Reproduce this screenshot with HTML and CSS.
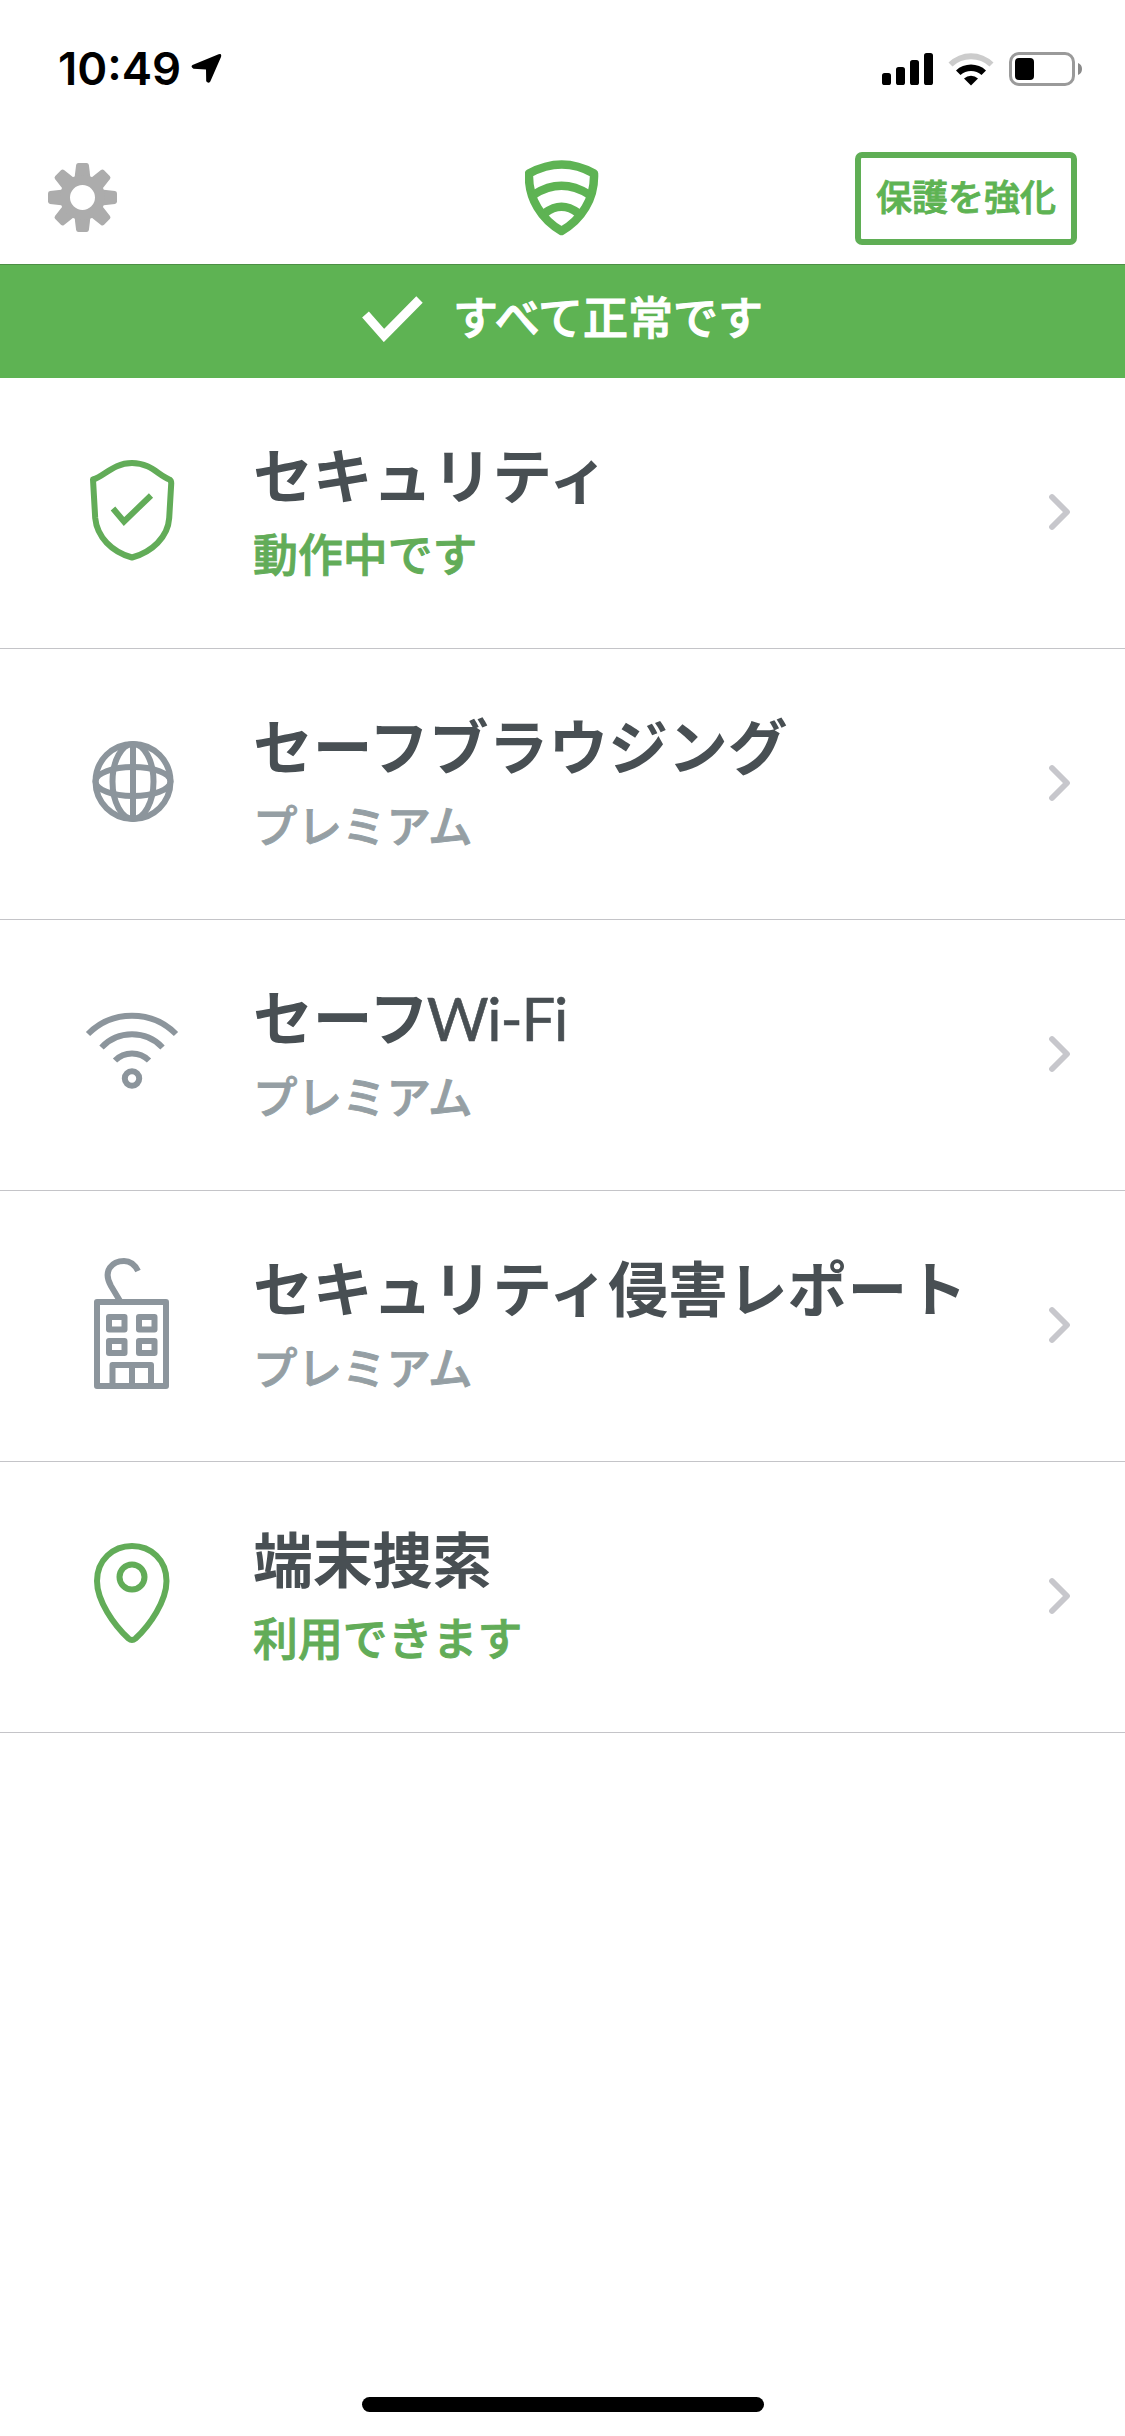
FILE: index.html
```html
<!DOCTYPE html>
<html lang="ja">
<head>
<meta charset="utf-8">
<title>すべて正常です</title>
<link rel="stylesheet" href="styles.css">
</head>
<body>
<div class="screen">
  <div class="status">
    <div class="status-left">
      <span class="time">10:49</span>
      <svg class="location" width="32" height="32" viewBox="0 0 32 32"><path d="M1.500 12 27.600 1.300Q31 .2 30 4L19.300 28.500Q17.300 31 15.200 28.200L15 16.400 2.500 15.700Q-.8 14 1.500 12Z"/></svg>
    </div>
    <div class="status-right">
      <svg width="52" height="32" viewBox="0 0 52 32"><rect y="20" width="9" height="12" rx="2.600"/><rect x="14" y="14" width="9" height="18" rx="2.600"/><rect x="28" y="7" width="9" height="25" rx="2.600"/><rect x="42" width="9" height="32" rx="2.600"/></svg>
      <svg class="wifi-status" width="46" height="34" viewBox="0 0 46 34"><path d="M.5 10.500A32 32 0 0 1 45.500 10.500L41.500 14.500A27 27 0 0 0 4.500 14.500Z" fill="#ccc"/><path d="M8 18.500A22 22 0 0 1 38 18.500L33.500 23A15.500 15.500 0 0 0 12.500 23Z"/><path d="M16 26.500A10.500 10.500 0 0 1 30 26.500L23 33.500Z"/></svg>
      <svg class="battery" width="74" height="34" viewBox="0 0 74 34"><rect x="1.500" y="1.500" width="63" height="31" rx="8.500" fill="none" stroke="#9a9a9a" stroke-width="3"/><rect x="6" y="6" width="19" height="22" rx="4"/><path d="M69 11Q73 12.500 73 17T69 23Z" fill="#8a8a8a"/></svg>
    </div>
  </div>

  <header class="nav">
    <svg class="gear" width="69" height="69" viewBox="-34.500 -34.500 69 69">
      <defs><path id="tooth" d="M-8-19-6.400-32.500Q-6-34.500-4-34.500H4Q6-34.500 6.400-32.500L8-19Z"/></defs>
      <g fill="#acacac"><use href="#tooth"/><use href="#tooth" transform="rotate(45)"/><use href="#tooth" transform="rotate(90)"/><use href="#tooth" transform="rotate(135)"/><use href="#tooth" transform="rotate(180)"/><use href="#tooth" transform="rotate(225)"/><use href="#tooth" transform="rotate(270)"/><use href="#tooth" transform="rotate(315)"/></g>
      <circle r="17.500" fill="none" stroke="#acacac" stroke-width="10"/>
    </svg>
    <svg class="logo" width="74" height="76" viewBox="0 0 74 76" fill="none" stroke="#5eb353" stroke-width="8.500">
      <path d="M4 13.500Q37-4.500 69 13.500C70 39 56 60 36.500 71 17 60 3 39 4 13.500Z" stroke-linejoin="round"/>
      <path d="M9 34.500Q36.500 17 64 34.500M20 53Q36.500 40.500 53 53"/>
    </svg>
    <button class="upgrade">保護を強化</button>
  </header>

  <div class="banner">
    <svg width="61" height="46" viewBox="0 0 61 46"><path d="M3.500 18.500 22 39.500 57.500 3.500" fill="none" stroke="#fff" stroke-width="9"/></svg>
    <span>すべて正常です</span>
  </div>

  <ul class="list">
    <li class="row on">
      <svg class="icon" viewBox="0 0 100 140"><path d="M11 36.500C23 33 31 20 50 20S77 33 87.500 36.500Q89.500 38 89.200 41L87.200 75C86 94 70 109 50 114.500 30 109 15 94 13.200 75L11 36.500Z" stroke-linejoin="round"/><path d="M31 65.500 42 78.500 69 52.500"/></svg>
      <div class="copy"><h2>セキュリティ</h2><p>動作中です</p></div>
      <svg class="chevron" viewBox="0 0 24 40"><path d="M5 4 20 19 5 34"/></svg>
    </li>
    <li class="row">
      <svg class="icon" viewBox="0 0 100 140"><circle cx="51" cy="67.500" r="37.500"/><path d="M51 30V105"/><ellipse cx="51" cy="67.500" rx="20.500" ry="37.500"/><ellipse cx="51" cy="67.500" rx="37.500" ry="14.500"/></svg>
      <div class="copy"><h2>セーフブラウジング</h2><p>プレミアム</p></div>
      <svg class="chevron" viewBox="0 0 24 40"><path d="M5 4 20 19 5 34"/></svg>
    </li>
    <li class="row">
      <svg class="icon" viewBox="0 0 100 140"><path d="M6 49A62 62 0 0 1 94 49M19.500 62.500A42 42 0 0 1 80.500 62.500M33 75.500A24 24 0 0 1 67 75.500"/><circle cx="50" cy="93.500" r="7.200"/></svg>
      <div class="copy"><h2>セーフ<span class="latin">Wi-Fi</span></h2><p>プレミアム</p></div>
      <svg class="chevron" viewBox="0 0 24 40"><path d="M5 4 20 19 5 34"/></svg>
    </li>
    <li class="row">
      <svg class="icon" viewBox="0 0 100 140" stroke-linejoin="round"><path d="M15 46H84V130H15ZM27 61H42.500V73.500H27ZM57 61H72.500V73.500H57ZM27 85H42.500V97H27ZM57 85H72.500V97H57ZM30.500 130V109H69V130M50 109V130M38 45 29 30C20 14 31 5 42 5Q51 5 56 15"/></svg>
      <div class="copy"><h2>セキュリティ侵害レポート</h2><p>プレミアム</p></div>
      <svg class="chevron" viewBox="0 0 24 40"><path d="M5 4 20 19 5 34"/></svg>
    </li>
    <li class="row on">
      <svg class="icon" viewBox="0 0 100 140"><path d="M50 19C31 19 15 33 15 54 15 74 32 98 46.500 111.500Q50 114.500 53.500 111.500C68 98 84.500 74 84.500 54 84.500 33 69 19 50 19Z"/><circle cx="50" cy="50" r="12.500"/></svg>
      <div class="copy"><h2>端末捜索</h2><p>利用できます</p></div>
      <svg class="chevron" viewBox="0 0 24 40"><path d="M5 4 20 19 5 34"/></svg>
    </li>
  </ul>
  <div class="home-indicator"></div>
</div>
</body>
</html>
```
FILE: styles.css
```css
* { box-sizing: border-box; margin: 0; padding: 0; }
body { background: #fff; font-family: "Noto Sans CJK JP", sans-serif; }
svg { display: block; flex: none; }
.screen { width: 1125px; height: 2436px; display: flex; flex-direction: column; overflow: hidden; }
.status { height: 132px; display: flex; justify-content: space-between; padding: 0 42px 0 58px; }
.status-left { display: flex; }
.time { font: 600 45.500px/60px Inter, sans-serif; margin-top: 39px; width: 133px; white-space: nowrap; }
.location { margin-top: 53px; }
.status-right { display: flex; padding-top: 53px; }
.wifi-status { margin: -1px 0 0 14px; }
.battery { margin: -1px 0 0 15px; }
.nav { height: 132px; display: flex; align-items: flex-start; padding: 20px 48px 0; }
.gear { margin-top: 11px; }
.logo { margin: 8px 0 0 408px; }
.upgrade { width: 222px; height: 93px; margin-left: auto; border: 6px solid #5fae55; border-radius: 7px; background: #fff; color: #5eb353; font: 500 36px/52px "Noto Sans CJK JP", sans-serif; -webkit-text-stroke: 0.9px currentColor; padding-bottom: 8px; white-space: nowrap; }
.banner { height: 114px; border-top: 1px solid #4d8f45; background: #5eb353; color: #fff; display: flex; align-items: flex-start; padding: 31px 0 0 362px; }
.banner span { font-size: 45px; line-height: 60px; font-weight: 500; -webkit-text-stroke: 1.1px currentColor; margin: -10px 0 0 30px; }
.list { list-style: none; }
.row { height: 271px; border-bottom: 1px solid #c4c4c8; display: flex; padding: 65px 54px 0 82px; color: #959fa4; }
.icon { width: 100px; height: 140px; fill: none; stroke: #8c959c; stroke-width: 6; }
.on { color: #62ac58; }
.on .icon { stroke: #62ac58; }
.copy { margin: -10px 0 0 71px; flex: 1; white-space: nowrap; }
h2 { font-size: 59.800px; height: 80px; line-height: 80px; font-weight: 700; color: #484f53; }
.latin { font-family: Lato, sans-serif; font-weight: 400; line-height: 1; letter-spacing: -1.200px; margin-left: -2px; -webkit-text-stroke: 0.6px currentColor; }
p { font-size: 44.500px; line-height: 60px; font-weight: 500; margin-top: 10px; -webkit-text-stroke: 0.9px currentColor; }
.on p { font-size: 44.900px; }
.chevron { width: 24px; height: 40px; margin-top: 50px; fill: none; stroke: #c7c7cc; stroke-width: 5.800; stroke-linecap: round; stroke-linejoin: round; }
.home-indicator { width: 402px; height: 15px; border-radius: 8px; background: #000; margin: auto auto 24px; }
```
